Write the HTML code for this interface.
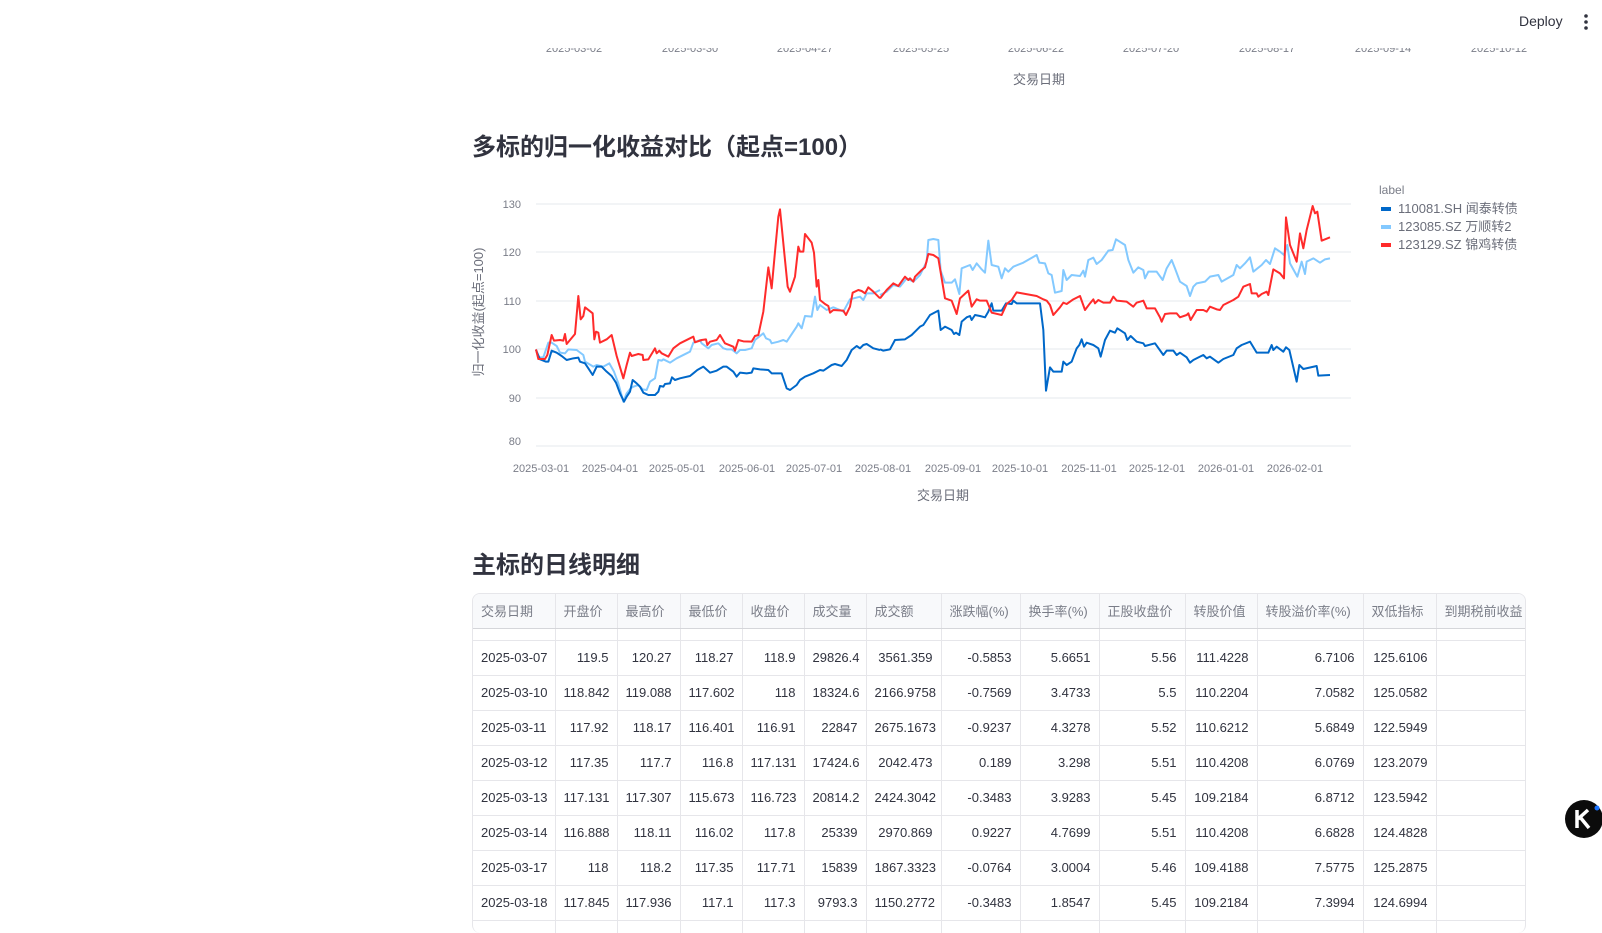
<!DOCTYPE html>
<html><head><meta charset="utf-8">
<style>
*{margin:0;padding:0;box-sizing:border-box}
body{width:1602px;height:929px;overflow:hidden;background:#fff;font-family:"Liberation Sans","Noto Sans CJK SC",sans-serif;color:#31333f;position:relative}
.abs{position:absolute;white-space:nowrap}
h2{position:absolute;left:472px;font-size:24px;font-weight:700;color:#31333f;font-family:"Liberation Sans","Noto Sans CJK SC",sans-serif}
table{position:absolute;border-collapse:collapse;font-size:13px;table-layout:fixed;width:1060px}
.tw{position:absolute;left:472px;top:593px;width:1054px;height:340px;overflow:hidden;border:1px solid #e6e6ea;border-radius:8px;border-bottom:none}
.tw table{left:0;top:0}
td,th{border-right:1px solid #e6e6ea;border-bottom:1px solid #e6e6ea;padding:0 8px;white-space:nowrap;overflow:hidden}
th{height:34px;background:#f8f9fb;font-weight:400;color:#7a7d88;text-align:left;border-bottom:1px solid #d5d6da}
td{height:35px;text-align:right;color:#31333f}
td:first-child{text-align:left}
tr.gap td{height:12px}
</style></head><body>

<div class="abs" style="left:1519px;top:13px;font-size:14px;color:#31333f">Deploy</div>
<svg class="abs" style="left:1580px;top:13px" width="12" height="18"><circle cx="6" cy="3" r="1.8" fill="#31333f"/><circle cx="6" cy="9" r="1.8" fill="#31333f"/><circle cx="6" cy="15" r="1.8" fill="#31333f"/></svg>

<div class="abs" style="left:0;top:48px;width:1602px;height:5px;overflow:hidden">
<svg width="1602" height="20" style="position:absolute;top:-9px;left:0" font-size="11" fill="#7a7d88" font-family="Liberation Sans" text-anchor="middle">
<text x="574" y="13">2025-03-02</text><text x="690" y="13">2025-03-30</text><text x="805" y="13">2025-04-27</text><text x="921" y="13">2025-05-25</text><text x="1036" y="13">2025-06-22</text><text x="1151" y="13">2025-07-20</text><text x="1267" y="13">2025-08-17</text><text x="1383" y="13">2025-09-14</text><text x="1499" y="13">2025-10-12</text>
</svg></div>
<div class="abs" style="left:1013px;top:69px;font-size:13px;color:#6b6e7a">交易日期</div>

<h2 style="top:127px">多标的归一化收益对比（起点=100）</h2>

<svg class="abs" style="left:0;top:0" width="1602" height="520" font-family="Liberation Sans,Noto Sans CJK SC,sans-serif">
<g stroke="#e6e8ee" stroke-width="1">
<line x1="536" x2="1351" y1="204" y2="204"/><line x1="536" x2="1351" y1="252" y2="252"/><line x1="536" x2="1351" y1="301" y2="301"/><line x1="536" x2="1351" y1="349" y2="349"/><line x1="536" x2="1351" y1="398" y2="398"/><line x1="536" x2="1351" y1="446" y2="446"/>
</g>
<g font-size="11" fill="#7a7d88" text-anchor="end">
<text x="521" y="208">130</text><text x="521" y="256">120</text><text x="521" y="305">110</text><text x="521" y="353">100</text><text x="521" y="402">90</text><text x="521" y="445">80</text>
</g>
<g font-size="11" fill="#7a7d88" text-anchor="middle">
<text x="541" y="472">2025-03-01</text><text x="610" y="472">2025-04-01</text><text x="677" y="472">2025-05-01</text><text x="747" y="472">2025-06-01</text><text x="814" y="472">2025-07-01</text><text x="883" y="472">2025-08-01</text><text x="953" y="472">2025-09-01</text><text x="1020" y="472">2025-10-01</text><text x="1089" y="472">2025-11-01</text><text x="1157" y="472">2025-12-01</text><text x="1226" y="472">2026-01-01</text><text x="1295" y="472">2026-02-01</text>
</g>
<text x="943" y="500" font-size="13" fill="#6b6e7a" text-anchor="middle">交易日期</text>
<text transform="translate(483,312) rotate(-90)" font-size="13" fill="#6b6e7a" text-anchor="middle">归一化收益(起点=100)</text>
<text x="1379" y="194" font-size="12" fill="#7a7d88">label</text>
<rect x="1381" y="207" width="10" height="4" fill="#0068c9"/><text x="1398" y="213" font-size="13" fill="#6b6e7a">110081.SH 闻泰转债</text>
<rect x="1381" y="225" width="10" height="4" fill="#83c9ff"/><text x="1398" y="231" font-size="13" fill="#6b6e7a">123085.SZ 万顺转2</text>
<rect x="1381" y="243" width="10" height="4" fill="#ff2b2b"/><text x="1398" y="249" font-size="13" fill="#6b6e7a">123129.SZ 锦鸡转债</text>

<g transform="translate(460,180) scale(0.33333)" fill="none" stroke-linejoin="round">
<polyline vector-effect="non-scaling-stroke" stroke-width="2" stroke="#83c9ff" points="228,508 235,532 250,532 265,488 275,488 290,498 300,518 315,520 325,508 350,510 370,525 375,545 400,560 410,555 430,560 448,550 462,575 475,610 490,665 500,640 512,625 520,620 535,615 548,628 560,630 570,605 585,595 595,540 605,542 610,538 630,548 650,535 680,520 690,515 700,488 720,480 725,490 745,505 755,495 775,490 790,505 800,508 815,508 830,520 840,510 855,510 875,505 885,480 910,460 918,475 930,480 935,490 955,485 970,480 980,485 990,470 1010,440 1015,430 1025,445 1035,408 1055,410 1065,350 1072,390 1080,375 1100,390 1120,382 1140,390 1150,395 1170,358 1200,350 1210,360 1220,340 1240,340 1260,330"/>
<polyline vector-effect="non-scaling-stroke" stroke-width="2" stroke="#0068c9" points="228,510 240,538 258,545 265,545 275,512 290,518 305,528 320,540 340,535 355,533 360,545 375,550 385,565 398,585 410,560 425,560 440,575 455,588 468,608 480,640 492,665 500,650 510,635 518,600 530,610 540,620 550,638 565,645 585,645 595,635 600,618 610,620 615,612 630,610 636,592 645,600 660,595 690,588 700,580 712,570 730,560 750,578 770,572 790,560 800,560 820,575 830,590 840,578 860,580 875,578 880,565 900,568 925,570 935,580 965,580 970,595 980,625 990,630 1010,615 1020,600 1035,590 1060,580 1080,570 1090,572 1115,555 1125,552 1145,558 1160,540 1175,510 1190,498 1200,505 1210,495 1220,492 1240,505 1260,510"/>
<polyline vector-effect="non-scaling-stroke" stroke-width="2" stroke="#ff2b2b" points="228,508 235,537 255,537 262,525 275,465 282,482 300,480 310,482 315,462 320,492 345,462 355,348 362,418 370,408 375,382 398,400 403,478 408,455 415,458 420,488 440,478 455,465 470,528 490,595 500,555 510,518 515,528 535,522 548,525 550,540 565,538 585,505 590,520 598,512 605,520 625,530 640,505 660,490 690,475 700,470 705,487 725,480 738,478 742,495 750,485 770,480 780,465 795,490 820,500 825,512 835,480 850,484 875,485 885,468 895,465 910,395 925,262 935,325 945,215 955,110 960,88 972,210 983,320 990,335 1005,290 1015,200 1020,215 1030,215 1035,162 1055,188 1062,218 1070,320 1075,300 1080,360 1095,372 1105,378 1110,398 1120,390 1150,392 1158,405 1170,380 1178,338 1195,330 1205,333 1215,340 1225,322 1240,335 1260,355"/>
</g>
<g transform="translate(880,180) scale(0.33333)" fill="none" stroke-linejoin="round">
<polyline vector-effect="non-scaling-stroke" stroke-width="2" stroke="#83c9ff" points="0,345 20,335 40,315 60,320 80,295 100,305 120,285 140,245 145,180 160,177 175,180 182,272 195,308 215,308 225,298 238,342 245,265 270,255 278,270 290,250 305,268 315,278 325,182 335,255 355,260 365,295 375,265 385,275 400,260 430,248 470,225 478,248 495,250 505,280 515,285 525,338 545,333 550,270 560,300 575,285 600,288 610,272 615,290 625,240 640,233 650,252 665,240 685,212 698,210 708,178 735,195 745,240 760,278 775,262 790,270 795,295 805,275 830,275 848,300 860,265 875,240 885,265 900,305 920,318 930,348 940,320 950,310 975,305 990,290 1015,285 1025,305 1060,285 1070,255 1080,265 1095,250 1110,232 1120,275 1145,255 1158,240 1170,252 1185,205 1200,215 1212,225 1222,195 1230,250 1252,290 1265,245 1275,282 1280,245 1300,235 1320,248 1335,238 1350,235"/>
<polyline vector-effect="non-scaling-stroke" stroke-width="2" stroke="#0068c9" points="0,508 10,512 30,508 45,480 75,478 95,465 105,455 120,440 130,435 150,405 175,392 182,450 195,440 215,450 222,462 228,458 238,465 245,425 260,412 270,408 275,420 285,405 300,408 315,412 325,395 335,370 340,392 365,392 378,370 395,372 400,362 410,370 480,370 490,450 498,632 510,562 520,575 545,575 550,545 560,555 575,545 590,505 598,495 605,478 612,500 620,488 640,495 655,505 662,530 675,480 690,452 705,458 712,445 735,460 742,480 752,468 770,485 790,490 795,498 825,490 850,525 860,512 880,512 890,525 900,518 920,532 930,548 940,540 960,530 970,525 980,535 990,530 1015,548 1030,537 1060,525 1070,505 1085,495 1110,485 1130,518 1165,518 1175,495 1180,510 1190,500 1210,515 1218,502 1228,510 1250,605 1258,555 1270,567 1310,558 1315,587 1350,585"/>
<polyline vector-effect="non-scaling-stroke" stroke-width="2" stroke="#ff2b2b" points="0,355 20,330 40,310 55,318 75,290 85,300 90,295 100,305 105,290 125,270 135,262 145,222 160,225 175,235 195,355 215,362 230,402 240,355 265,332 275,380 290,358 300,362 320,362 335,398 365,405 380,372 395,360 410,337 470,348 490,358 500,362 510,375 520,405 540,382 550,368 560,372 580,358 600,348 615,390 630,370 640,358 645,370 655,360 670,368 690,368 700,350 710,362 740,365 760,380 770,368 790,362 800,385 825,385 840,412 845,425 855,402 870,400 890,400 900,412 920,405 925,400 932,420 950,390 970,390 980,395 990,380 1010,388 1020,390 1030,375 1060,360 1075,350 1090,320 1110,312 1115,340 1130,340 1135,350 1145,342 1160,335 1165,345 1180,268 1200,280 1212,295 1218,112 1230,195 1250,245 1260,160 1270,205 1280,150 1298,78 1305,100 1312,95 1325,182 1350,172"/>
</g>
</svg>

<h2 style="top:545px">主标的日线明细</h2>

<div class="tw">
<table>
<colgroup><col style="width:82px"><col style="width:62px"><col style="width:63px"><col style="width:62px"><col style="width:62px"><col style="width:62px"><col style="width:75px"><col style="width:79px"><col style="width:79px"><col style="width:86px"><col style="width:72px"><col style="width:106px"><col style="width:73px"><col style="width:97px"></colgroup>
<tr><th>交易日期</th><th>开盘价</th><th>最高价</th><th>最低价</th><th>收盘价</th><th>成交量</th><th>成交额</th><th>涨跌幅(%)</th><th>换手率(%)</th><th>正股收盘价</th><th>转股价值</th><th>转股溢价率(%)</th><th>双低指标</th><th>到期税前收益</th></tr>
<tr class="gap"><td></td><td></td><td></td><td></td><td></td><td></td><td></td><td></td><td></td><td></td><td></td><td></td><td></td><td></td></tr>
<tr><td>2025-03-07</td><td>119.5</td><td>120.27</td><td>118.27</td><td>118.9</td><td>29826.4</td><td>3561.359</td><td>-0.5853</td><td>5.6651</td><td>5.56</td><td>111.4228</td><td>6.7106</td><td>125.6106</td><td></td></tr>
<tr><td>2025-03-10</td><td>118.842</td><td>119.088</td><td>117.602</td><td>118</td><td>18324.6</td><td>2166.9758</td><td>-0.7569</td><td>3.4733</td><td>5.5</td><td>110.2204</td><td>7.0582</td><td>125.0582</td><td></td></tr>
<tr><td>2025-03-11</td><td>117.92</td><td>118.17</td><td>116.401</td><td>116.91</td><td>22847</td><td>2675.1673</td><td>-0.9237</td><td>4.3278</td><td>5.52</td><td>110.6212</td><td>5.6849</td><td>122.5949</td><td></td></tr>
<tr><td>2025-03-12</td><td>117.35</td><td>117.7</td><td>116.8</td><td>117.131</td><td>17424.6</td><td>2042.473</td><td>0.189</td><td>3.298</td><td>5.51</td><td>110.4208</td><td>6.0769</td><td>123.2079</td><td></td></tr>
<tr><td>2025-03-13</td><td>117.131</td><td>117.307</td><td>115.673</td><td>116.723</td><td>20814.2</td><td>2424.3042</td><td>-0.3483</td><td>3.9283</td><td>5.45</td><td>109.2184</td><td>6.8712</td><td>123.5942</td><td></td></tr>
<tr><td>2025-03-14</td><td>116.888</td><td>118.11</td><td>116.02</td><td>117.8</td><td>25339</td><td>2970.869</td><td>0.9227</td><td>4.7699</td><td>5.51</td><td>110.4208</td><td>6.6828</td><td>124.4828</td><td></td></tr>
<tr><td>2025-03-17</td><td>118</td><td>118.2</td><td>117.35</td><td>117.71</td><td>15839</td><td>1867.3323</td><td>-0.0764</td><td>3.0004</td><td>5.46</td><td>109.4188</td><td>7.5775</td><td>125.2875</td><td></td></tr>
<tr><td>2025-03-18</td><td>117.845</td><td>117.936</td><td>117.1</td><td>117.3</td><td>9793.3</td><td>1150.2772</td><td>-0.3483</td><td>1.8547</td><td>5.45</td><td>109.2184</td><td>7.3994</td><td>124.6994</td><td></td></tr>
<tr><td>&nbsp;</td><td></td><td></td><td></td><td></td><td></td><td></td><td></td><td></td><td></td><td></td><td></td><td></td><td></td></tr>
</table>
</div>

<svg class="abs" style="left:1564px;top:799px" width="40" height="40">
<circle cx="20" cy="20" r="19" fill="#0b0b0b"/>
<path d="M13 11 V29 M14 20 L24 11 M16 18 L25 29" stroke="#fff" stroke-width="3.5" fill="none"/>
<circle cx="33" cy="9" r="2.5" fill="#1a73ff"/>
</svg>
</body></html>
